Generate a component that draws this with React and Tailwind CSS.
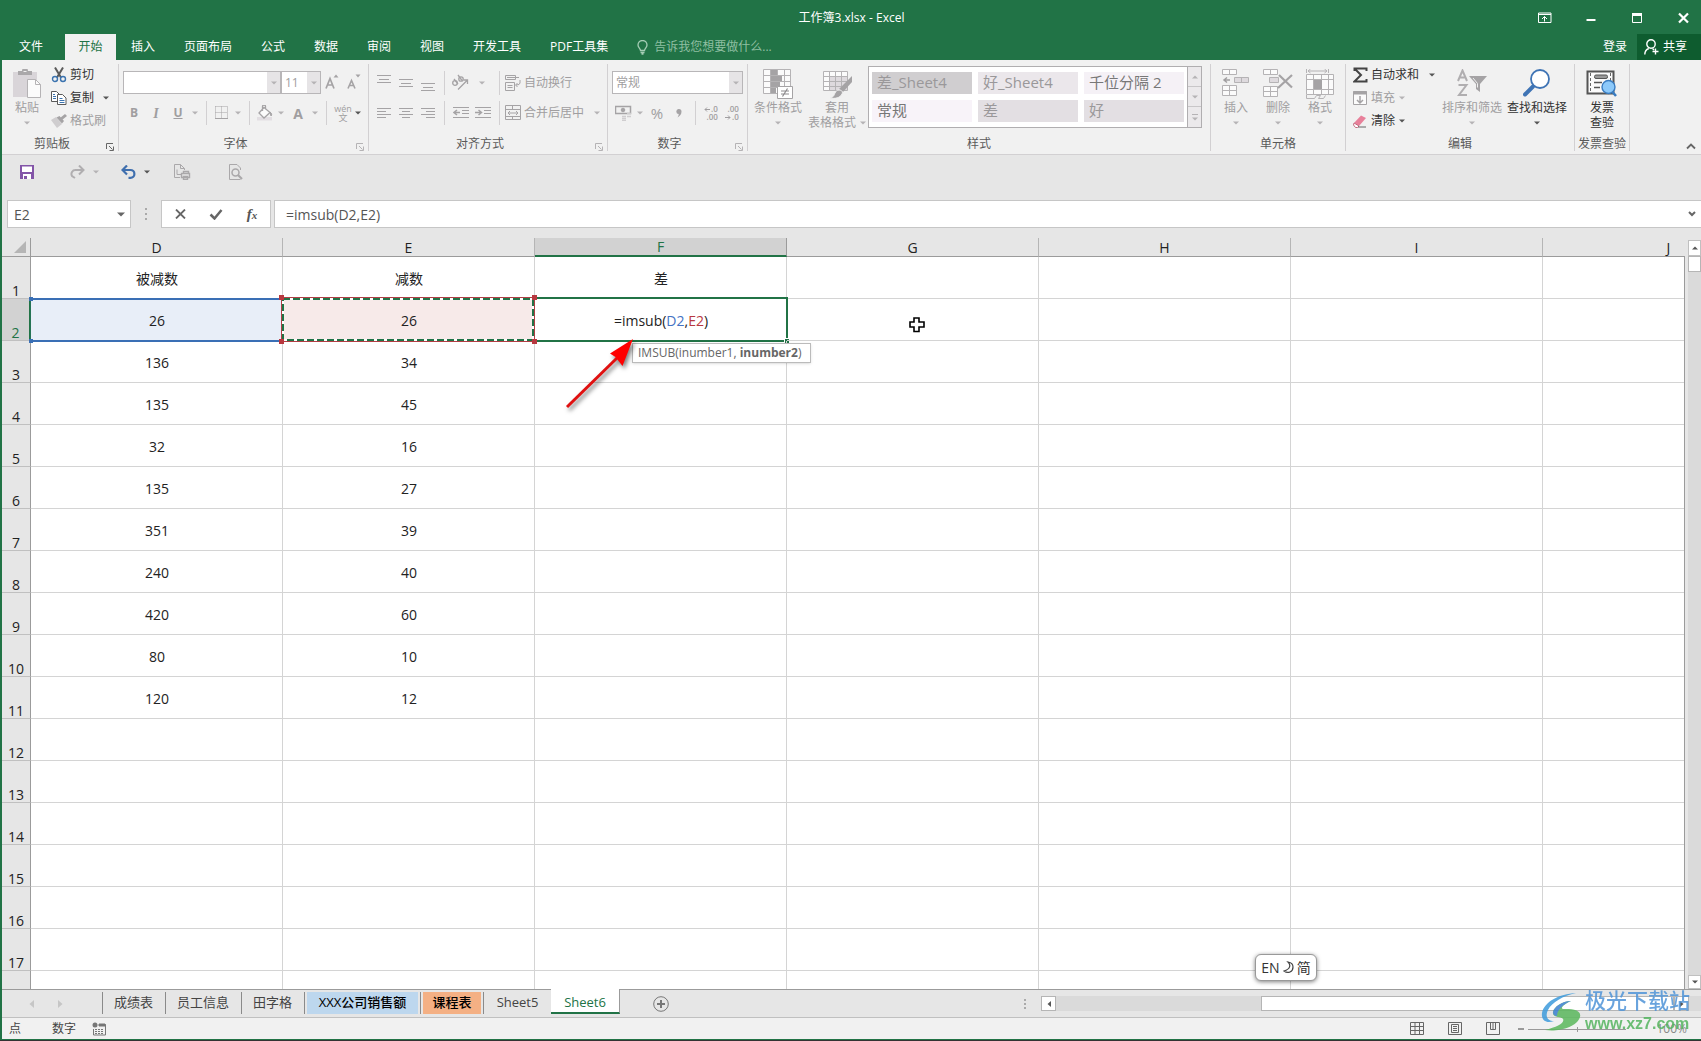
import { useState } from 'react';

const columns = ['D', 'E', 'F', 'G', 'H', 'I', 'J'];

const initialRows = [
  ['被减数', '减数', '差'],
  ['26', '26', '=imsub(D2,E2)'],
  ['136', '34'],
  ['135', '45'],
  ['32', '16'],
  ['135', '27'],
  ['351', '39'],
  ['240', '40'],
  ['420', '60'],
  ['80', '10'],
  ['120', '12'],
  [], [], [], [], [], [], [],
];

const menuTabs = ['插入', '页面布局', '公式', '数据', '审阅', '视图', '开发工具', 'PDF工具集'];

function Caret({ dark }) {
  return (
    <svg width="6" height="4" viewBox="0 0 6 4" aria-hidden="true" className="shrink-0">
      <path d="M0 0.5h6L3 3.5z" fill={dark ? '#555' : '#b5b3b5'} />
    </svg>
  );
}

function Launcher({ dark }) {
  return (
    <button aria-label="更多" className="absolute right-1 bottom-0">
      <svg width="8" height="8" viewBox="0 0 8 8" fill="none" stroke={dark ? '#666' : '#b5b3b5'}>
        <path d="M0.5 6V0.5H7M3 3l3.5 3.5M7.5 3.500v4h-4" />
      </svg>
    </button>
  );
}

function Group({ label, width, launcher, darkLauncher, children }) {
  return (
    <section className={`relative flex shrink-0 flex-col border-r border-[#d2d0d2] ${width}`}>
      <div className="flex h-[71px]">{children}</div>
      <div className={`h-4 text-center leading-[18px] whitespace-nowrap text-[#5a5a5a] ${launcher ? 'pr-4' : ''}`}>{label}</div>
      {launcher && <Launcher dark={darkLauncher} />}
    </section>
  );
}

function BigButton({ icon, lines, width, dark, inlineCaret, noCaret }) {
  return (
    <button className={`flex flex-col items-center pt-[5px] ${width} ${dark ? 'text-[#333]' : 'text-[#a09ea0]'}`}>
      <span className="flex h-[31px] items-start">{icon}</span>
      {lines.map((line, i) => (
        <span key={line} className="flex items-center gap-1 leading-[15px] whitespace-nowrap">
          {line}
          {inlineCaret && i === lines.length - 1 && <Caret />}
        </span>
      ))}
      {!inlineCaret && !noCaret && <span className="flex h-[15px] items-center"><Caret dark={dark} /></span>}
    </button>
  );
}

function RowButton({ icon, text, dark, caret, caretDark, gap = 'gap-1' }) {
  return (
    <button className={`flex h-[23px] items-center gap-[3px] whitespace-nowrap ${dark ? 'text-[#333]' : 'text-[#a09ea0]'}`}>
      <span className="flex w-4 justify-center">{icon}</span>
      <span>{text}</span>
      {caret && <span className={gap}><Caret dark={caretDark} /></span>}
    </button>
  );
}

function Tool({ label, width = 'w-[22px]', children }) {
  return (
    <button aria-label={label} className={`flex h-[22px] shrink-0 items-center justify-center text-[#a09ea0] ${width}`}>
      {children}
    </button>
  );
}

function Sep() {
  return <span className="mx-[5px] h-6 w-px shrink-0 bg-[#d2d0d2]" />;
}

function Dropdown({ label, value, width }) {
  return (
    <div className={`flex h-[23px] border border-[#b8b6b8] bg-white ${width}`}>
      <select aria-label={label} defaultValue={value} className="min-w-0 flex-1 appearance-none bg-white px-[3px] text-[12px] leading-5 text-[#a09ea0] outline-none">
        <option value={value}>{value}</option>
      </select>
      <span className="flex w-[13px] items-center justify-center bg-[#e6e4e6]"><Caret /></span>
    </div>
  );
}

function Lines({ rows }) {
  return (
    <svg width="14" height="16" viewBox="0 0 14 16" stroke="#a5a3a5" aria-hidden="true">
      {rows.map(([x1, x2, y]) => <path key={y} d={`M${x1} ${y}.5H${x2}`} />)}
    </svg>
  );
}

function PasteIcon() {
  return (
    <svg width="30" height="31" viewBox="0 0 30 31" aria-hidden="true">
      <path d="M1 3h24v25H1z" fill="#d9d5d9" />
      <path d="M6 2h4a3 3 0 0 1 6 0h4v4H6z" fill="#aaa8aa" />
      <path d="M11.500 2.500h3" stroke="#f1f1f1" />
      <path d="M15.500 10.500h8l5 5v13h-13z" fill="#fbfbfb" stroke="#b5b3b5" />
      <path d="M23.500 10.500v5h5" fill="none" stroke="#b5b3b5" />
    </svg>
  );
}

function CutIcon() {
  return (
    <svg width="16" height="16" viewBox="0 0 16 16" fill="none" aria-hidden="true">
      <path d="M4 0.500l6 10M12 0.500l-6 10" stroke="#5a5a5a" strokeWidth="2" />
      <circle cx="4" cy="12" r="2.500" stroke="#3b73af" strokeWidth="1.400" />
      <circle cx="12" cy="12" r="2.500" stroke="#3b73af" strokeWidth="1.400" />
    </svg>
  );
}

function CopyIcon() {
  return (
    <svg width="16" height="14" viewBox="0 0 16 14" fill="#fff" stroke="#5a5a5a" aria-hidden="true">
      <path d="M0.500 0.500h5l3 3v7h-8z" />
      <path d="M6.500 3.500h5l3.500 3.500v6.500H6.500z" />
      <path d="M2 3.500h2M2 5.500h3M2 7.500h3M8.500 7.500h3M8.500 9.500h5M8.500 11.500h5" stroke="#3b73af" />
    </svg>
  );
}

function BrushIcon() {
  return (
    <svg width="16" height="14" viewBox="0 0 16 14" aria-hidden="true">
      <path d="M0 6l5-3 6 7-5 4z" fill="#cfcdcf" />
      <path d="M5.500 3.500l3-1.500 4.500 5-2 2.500z" fill="#a5a3a5" />
      <path d="M9 4l5-4 2 2-5 4z" fill="#a5a3a5" />
    </svg>
  );
}

function ConditionalIcon() {
  return (
    <svg width="30" height="30" viewBox="0 0 30 30" fill="none" stroke="#b5b3b5" aria-hidden="true">
      <path d="M0.500 0.500h27v24H0.500zM0.500 6.500h27M0.500 12.500h27M0.500 18.500h27M7.500 0.500v24M14.500 0.500v24M21.500 0.500v24" fill="#fbfbfb" />
      <path d="M8 1h6v5H8zM8 7h11v5H8zM8 13h9v5H8zM8 19h5v5H8z" fill="#a5a3a5" stroke="none" />
      <path d="M14.500 17.500h15v12h-15z" fill="#fff" stroke="#a5a3a5" />
      <path d="M18 22h8M18 25h8M24.500 19.500l-5 8" stroke="#8d8b8d" strokeWidth="1.200" />
    </svg>
  );
}

function TableFormatIcon() {
  return (
    <svg width="30" height="30" viewBox="0 0 30 30" aria-hidden="true">
      <path d="M1.500 2.500h24v19h-24z" fill="#fbfbfb" />
      <path d="M8 8h17v13H8z" fill="#dedade" />
      <path d="M1.500 2.500h24v19h-24zM1.500 7.500h24M1.500 12.500h24M1.500 17.500h24M7.500 2.500v19M13.500 2.500v19M19.500 2.500v19" fill="none" stroke="#b5b3b5" />
      <path d="M30 7v6l-9 10-4-3z" fill="#a5a3a5" />
      <path d="M17 21c3 0 4 2 3 4-2 4-7 5-12 4 4-1 4-3 5-5 1-2 2-3 4-3z" fill="#a5a3a5" stroke="#f1f1f1" />
    </svg>
  );
}

function InsertIcon() {
  return (
    <svg width="28" height="28" viewBox="0 0 28 28" fill="#fbfbfb" stroke="#b5b3b5" aria-hidden="true">
      <path d="M0.500 0.500h14v5h-14zM7.500 0.500v5M0.500 16.500h14v10h-14zM0.500 21.500h14M7.500 16.500v10" />
      <path d="M12.500 8.500h14v5h-14zM19.500 8.500v5" fill="#dedade" />
      <path d="M8 11H2M5 8.500L2 11l3 2.500" fill="none" stroke="#a09ea0" strokeWidth="1.500" />
    </svg>
  );
}

function DeleteIcon() {
  return (
    <svg width="30" height="28" viewBox="0 0 30 28" fill="#fbfbfb" stroke="#b5b3b5" aria-hidden="true">
      <path d="M0.500 0.500h14v5h-14zM7.500 0.500v5M0.500 17.500h14v10h-14zM0.500 22.500h14M7.500 17.500v10" />
      <path d="M6.500 8.500h9v5h-9z" fill="#dedade" />
      <path d="M16 6l13 12.500M29 6L15 19" fill="none" stroke="#a5a3a5" strokeWidth="2.200" />
    </svg>
  );
}

function FormatIcon() {
  return (
    <svg width="28" height="31" viewBox="0 0 28 31" fill="none" stroke="#b5b3b5" aria-hidden="true">
      <path d="M0.500 5.500h27v20h-27zM0.500 10.500h27M0.500 20.500h27M7.500 5.500v20M15.500 5.500v20M22.500 5.500v20" fill="#fbfbfb" />
      <path d="M8 11h8v9H8z" fill="#a5a3a5" stroke="none" />
      <path d="M0.500 0v4M22.500 0v4M2 2h19M4.500 0L2 2l2.500 2M18.500 0L21 2l-2.500 2" />
      <path d="M0.500 26v3.500h8l2-3h4l-2 3h5l2-3" />
    </svg>
  );
}

function SortFilterIcon() {
  return (
    <svg width="30" height="28" viewBox="0 0 30 28" aria-hidden="true">
      <g fill="none" stroke="#b0aeb0" strokeWidth="2">
        <path d="M1 12L5.500 1.500 10 12M2.500 8.500h6" />
        <path d="M1.500 16h8L2 26h8" />
      </g>
      <path d="M12 7h18l-7 8v8l-4-3v-5z" fill="#a5a3a5" />
      <path d="M16 9l4.500 5.500v4" fill="none" stroke="#f1f1f1" />
    </svg>
  );
}

function FindIcon() {
  return (
    <svg width="28" height="28" viewBox="0 0 28 28" aria-hidden="true">
      <path d="M10 17.500L2 25.500" stroke="#3f74b5" strokeWidth="4" strokeLinecap="round" />
      <circle cx="17" cy="10" r="9" fill="#fff" stroke="#3f74b5" strokeWidth="1.800" />
    </svg>
  );
}

function InvoiceIcon() {
  return (
    <svg width="32" height="28" viewBox="0 0 32 28" aria-hidden="true">
      <path d="M1.500 2.500h26v22h-26z" fill="#fafafa" stroke="#555" strokeWidth="2" />
      <path d="M4.500 4v20M24.500 4v20" stroke="#666" strokeDasharray="3 2" />
      <rect x="8.500" y="6" width="13" height="3.500" rx="1.500" fill="#999" stroke="#555" />
      <path d="M8 13.500h8M8 18.500h6" stroke="#555" strokeWidth="1.500" />
      <path d="M26.500 23l3.500 4" stroke="#3a7cc0" strokeWidth="2.500" />
      <circle cx="22.500" cy="18" r="6.500" fill="#8cc9fa" stroke="#3a7cc0" strokeWidth="1.400" />
    </svg>
  );
}

function TitleBar() {
  return (
    <div className="relative flex h-[34px] items-center pt-[2px] text-white">
      <h1 className="flex-1 text-center text-[12px]">工作簿3.xlsx - Excel</h1>
      <div className="absolute right-0 flex gap-[10px]">
        <button aria-label="功能区显示选项" className="flex w-9 justify-center">
          <svg width="14" height="12" viewBox="0 0 14 12" fill="none" stroke="#fff"><path d="M0.500 1h12.500v9.500H0.500zM0.500 2.500h12.500M6.500 9.500V4.500M4 7l2.500-2.500L9 7" /></svg>
        </button>
        <button aria-label="最小化" className="flex w-9 items-center justify-center">
          <svg width="10" height="12" viewBox="0 0 10 12"><path d="M0.500 8h9" stroke="#fff" strokeWidth="2" /></svg>
        </button>
        <button aria-label="最大化" className="flex w-9 items-center justify-center">
          <svg width="10" height="12" viewBox="0 0 10 12"><path d="M0.500 1.500h9v9h-9z" fill="none" stroke="#fff" /><path d="M0 1h10v3H0z" fill="#fff" /></svg>
        </button>
        <button aria-label="关闭" className="flex w-9 items-center justify-center">
          <svg width="11" height="12" viewBox="0 0 11 12"><path d="M1 1.500l9 9M10 1.500l-9 9" stroke="#fff" strokeWidth="2.200" /></svg>
        </button>
      </div>
    </div>
  );
}

function MenuBar() {
  return (
    <div className="flex h-[26px] text-white">
      <nav className="flex">
        <button className="w-[63px] pr-[5px]">文件</button>
        <button className="w-[51px] bg-[#f1f1f1] text-[#217346]">开始</button>
        {menuTabs.map((tab) => (
          <button key={tab} className="pr-[14px] pl-[15px] whitespace-nowrap">{tab}</button>
        ))}
      </nav>
      <label className="ml-[15px] flex items-center gap-[6px]">
        <svg width="11" height="15" viewBox="0 0 11 15" fill="none" stroke="#a5cdb5" strokeWidth="1.300" aria-hidden="true">
          <path d="M3.500 10.500c0-2-2.500-3-2.500-5.500a4.400 4.400 0 0 1 9 0c0 2.500-2.500 3.500-2.500 5.500zM3.500 12.500h4M4.500 14h2" />
        </svg>
        <input aria-label="操作说明搜索" placeholder="告诉我您想要做什么..." className="w-[160px] bg-transparent placeholder:text-[#8fbfa2] outline-none" />
      </label>
      <div className="ml-auto flex">
        <button className="px-[10px]">登录</button>
        <button className="flex w-16 items-center gap-1 bg-[#0e5c2f] pl-[7px]">
          <svg width="15" height="16" viewBox="0 0 15 16" fill="none" stroke="#fff" strokeWidth="1.400" aria-hidden="true">
            <circle cx="7" cy="5" r="4.200" />
            <path d="M0.800 15.500c0-3 1.500-5 4-6M8.500 9.500l1.500 1.500M11.500 9.500v6M8.500 12.500h6" />
          </svg>
          共享
        </button>
      </div>
    </div>
  );
}

function ClipboardGroup() {
  return (
    <Group label="剪贴板" width="w-[117px]" launcher darkLauncher>
      <div className="ml-[5px]"><BigButton icon={<PasteIcon />} lines={['粘贴']} width="w-10" /></div>
      <div className="-mt-px ml-1">
        <RowButton icon={<CutIcon />} text="剪切" dark />
        <RowButton icon={<CopyIcon />} text="复制" dark caret caretDark gap="ml-[6px]" />
        <RowButton icon={<BrushIcon />} text="格式刷" />
      </div>
    </Group>
  );
}

function FontGroup() {
  return (
    <Group label="字体" width="w-[250px]" launcher>
      <div className="ml-1 flex flex-col gap-[7px] pt-[7px]">
        <div className="flex">
          <Dropdown label="字体" value="" width="w-[158px]" />
          <Dropdown label="字号" value="11" width="w-[40px]" />
          <Tool label="增大字号">
            <svg width="14" height="16" viewBox="0 0 14 16" fill="none" stroke="#a5a3a5"><path d="M1 14.500L5 4.500 9 14.500M2.500 11h5" strokeWidth="1.700" /><path d="M8.500 3.500h5L11 0.500z" fill="#a5a3a5" stroke="none" /></svg>
          </Tool>
          <Tool label="减小字号">
            <svg width="14" height="16" viewBox="0 0 14 16" fill="none" stroke="#a5a3a5"><path d="M1 14.500l3.500-8 3.500 8M2.500 11.500h4" strokeWidth="1.600" /><path d="M8.500 0.500h5L11 3.500z" fill="#a5a3a5" stroke="none" /></svg>
          </Tool>
        </div>
        <div className="flex items-center">
          <Tool label="加粗"><b>B</b></Tool>
          <Tool label="倾斜"><b className="font-['Liberation_Serif'] text-[14px] italic">I</b></Tool>
          <Tool label="下划线"><b className="underline">U</b></Tool>
          <Tool label="下划线选项" width="w-3"><Caret /></Tool>
          <Sep />
          <Tool label="边框" width="w-5">
            <svg width="14" height="14" viewBox="0 0 14 14" fill="none" stroke="#a5a3a5"><path d="M0.500 0.500h12v12M0.500 0.500v12M6.500 0.500v12M0.500 6.500h12" strokeDasharray="1 1" /><path d="M0 12.500h13" /></svg>
          </Tool>
          <Tool label="边框选项" width="w-3"><Caret /></Tool>
          <Sep />
          <Tool label="填充颜色" width="w-5">
            <svg width="16" height="16" viewBox="0 0 16 16" fill="none" stroke="#a5a3a5"><path d="M0 12h15v3.500H0z" fill="#e2dee2" stroke="none" /><path d="M7 2.500l6 5-6 5.500-5-5zM5.500 6V1.500a1.500 1.500 0 0 1 3 0V4" strokeWidth="1.300" fill="#fbfbfb" /><path d="M13 7c2 1.500 2 3 1 4z" fill="#a5a3a5" /></svg>
          </Tool>
          <Tool label="填充颜色选项" width="w-3"><Caret /></Tool>
          <Tool label="字体颜色"><b className="text-[14px]">A</b></Tool>
          <Tool label="字体颜色选项" width="w-3"><Caret /></Tool>
          <Sep />
          <Tool label="拼音">
            <span className="flex flex-col items-center text-[9px] leading-[9px]"><span>wén</span><span>文</span></span>
          </Tool>
          <Tool label="拼音选项" width="w-2"><Caret dark /></Tool>
        </div>
      </div>
    </Group>
  );
}

function AlignGroup() {
  return (
    <Group label="对齐方式" width="w-[239px]" launcher>
      <div className="ml-1 flex flex-col gap-[7px] pt-[7px]">
        <div className="flex h-[23px] items-center">
          <Tool label="顶端对齐"><Lines rows={[[0, 14, 0], [2, 12, 4], [0, 14, 7]]} /></Tool>
          <Tool label="垂直居中"><Lines rows={[[0, 14, 4], [2, 12, 8], [0, 14, 11]]} /></Tool>
          <Tool label="底端对齐"><Lines rows={[[0, 14, 8], [2, 12, 12], [0, 14, 15]]} /></Tool>
          <Sep />
          <Tool label="方向" width="w-5">
            <svg width="18" height="18" viewBox="0 0 18 18" fill="none" stroke="#a5a3a5" strokeWidth="1.300"><circle cx="4" cy="9" r="2.300" /><path d="M3 5l4 5M7 1l4 5.500" /><circle cx="10" cy="5" r="2.200" /><path d="M7 15.500L16 6.500M12.500 6H16.500V10" /></svg>
          </Tool>
          <Tool label="方向选项" width="w-6"><Caret /></Tool>
          <Sep />
          <RowButton text="自动换行" icon={
            <svg width="16" height="16" viewBox="0 0 16 16" fill="none" stroke="#a5a3a5"><path d="M0.500 0.500h10v4H0.500zM0.500 7.500h9v8H0.500zM2.500 10.500h5M2.500 12.500h5M2 2.500h12M15 5v3q0 2-4 2M12.500 8l-2 2 2 2" /></svg>
          } />
        </div>
        <div className="flex items-center">
          <Tool label="左对齐"><Lines rows={[[0, 14, 3], [0, 9, 6], [0, 14, 9], [0, 9, 12]]} /></Tool>
          <Tool label="居中"><Lines rows={[[0, 14, 3], [3, 11, 6], [0, 14, 9], [3, 11, 12]]} /></Tool>
          <Tool label="右对齐"><Lines rows={[[0, 14, 3], [5, 14, 6], [0, 14, 9], [5, 14, 12]]} /></Tool>
          <Sep />
          <Tool label="减少缩进">
            <svg width="16" height="14" viewBox="0 0 16 14" fill="none" stroke="#a5a3a5"><path d="M0 1.500h16M9 4.500h7M9 7.500h7M0 11.500h16" /><path d="M7 6.500H1M4 4L1 6.500 4 9" strokeWidth="1.500" /></svg>
          </Tool>
          <Tool label="增加缩进">
            <svg width="16" height="14" viewBox="0 0 16 14" fill="none" stroke="#a5a3a5"><path d="M0 1.500h16M9 4.500h7M9 7.500h7M0 11.500h16" /><path d="M0 6.500h6M3.500 4l3 2.500-3 2.500" strokeWidth="1.500" /></svg>
          </Tool>
          <Sep />
          <RowButton text="合并后居中" caret gap="ml-[7px]" icon={
            <svg width="16" height="16" viewBox="0 0 16 16" fill="none" stroke="#a5a3a5"><path d="M0.500 0.500h15v14H0.500zM0.500 4.500h15M0.500 11.500h15M7.500 0.500v4M7.500 11.500v3M3 8h10M5 6L3 8l2 2M11 6l2 2-2 2" /></svg>
          } />
        </div>
      </div>
    </Group>
  );
}

function NumberGroup() {
  return (
    <Group label="数字" width="w-[140px]" launcher>
      <div className="ml-1 flex flex-col gap-[7px] pt-[7px]">
        <Dropdown label="数字格式" value="常规" width="w-[131px]" />
        <div className="flex items-center">
          <Tool label="会计数字格式">
            <svg width="17" height="16" viewBox="0 0 17 16" fill="none" stroke="#a5a3a5"><path d="M0.500 1.500h15v7H0.500z" strokeWidth="1.500" /><circle cx="8" cy="5" r="1.800" fill="#a5a3a5" /><path d="M7 11.500h4M12 11.500h4M7 13.500h4M12 8.500h4M7 15.500h4" stroke="#cfcdcf" strokeWidth="1.500" /></svg>
          </Tool>
          <Tool label="会计选项" width="w-3"><Caret /></Tool>
          <Tool label="百分比"><span className="text-[15px]">%</span></Tool>
          <Tool label="千位分隔">
            <svg width="6" height="9" viewBox="0 0 6 9"><path d="M3 0a2.500 2.500 0 0 1 2.500 2.500C5.500 5.500 4 7 1.500 8.500c.8-1.500 1.200-2.300 1.200-3.500A2.500 2.500 0 0 1 3 0z" fill="#a5a3a5" /></svg>
          </Tool>
          <Sep />
          <Tool label="增加小数位数" width="w-5">
            <span className="flex flex-col items-end text-[8px] leading-[8px] font-semibold">
              <span className="flex items-center gap-px">
                <svg width="6" height="5" viewBox="0 0 6 5" fill="none" stroke="#a09ea0"><path d="M6 2.500H1M3 0.500l-2 2 2 2" /></svg>.0
              </span>
              <span>.00</span>
            </span>
          </Tool>
          <Tool label="减少小数位数">
            <span className="flex flex-col items-end text-[8px] leading-[8px] font-semibold">
              <span>.00</span>
              <span className="flex items-center gap-px">
                <svg width="6" height="5" viewBox="0 0 6 5" fill="none" stroke="#a09ea0"><path d="M0 2.500h5M3 0.500l2 2-2 2" /></svg>.0
              </span>
            </span>
          </Tool>
        </div>
      </div>
    </Group>
  );
}

function StylesGroup() {
  return (
    <Group label="样式" width="w-[463px]">
      <div className="ml-[2px]"><BigButton icon={<ConditionalIcon />} lines={['条件格式']} width="w-14" /></div>
      <BigButton icon={<TableFormatIcon />} lines={['套用', '表格格式']} width="w-[62px]" inlineCaret />
      <div className="mt-[2px] flex h-[62px] border border-[#b0aeb0] bg-white">
        <div className="grid grid-cols-[repeat(3,100px)] content-center gap-[6px] px-[3px] text-[15px] leading-5 text-[#9a989a]">
          <button className="h-[22px] bg-[#d0ced0] pb-[2px] pl-[5px] text-left">差_Sheet4</button>
          <button className="h-[22px] bg-[#ebe7eb] pb-[2px] pl-[5px] text-left">好_Sheet4</button>
          <button className="h-[22px] bg-[#f5f1f6] pb-[2px] pl-[5px] text-left text-[#777]">千位分隔 2</button>
          <button className="h-[22px] bg-[#f8f3f9] pb-[2px] pl-[5px] text-left text-[#777]">常规</button>
          <button className="h-[22px] bg-[#e3dfe3] pb-[2px] pl-[5px] text-left">差</button>
          <button className="h-[22px] bg-[#e3dfe3] pb-[2px] pl-[5px] text-left">好</button>
        </div>
        <div className="grid w-[14px] grid-rows-3 divide-y divide-[#c8c6c8] border-l border-[#b0aeb0] bg-[#ebe9eb]">
          <button aria-label="上一行" className="flex items-center justify-center"><span className="rotate-180"><Caret /></span></button>
          <button aria-label="下一行" className="flex items-center justify-center"><Caret /></button>
          <button aria-label="更多样式" className="flex flex-col items-center justify-center gap-[2px]"><span className="h-px w-[6px] bg-[#b5b3b5]" /><Caret /></button>
        </div>
      </div>
    </Group>
  );
}

function EditGroup() {
  return (
    <Group label="编辑" width="w-[229px]">
      <div className="-mt-px ml-[6px] w-[89px]">
        <RowButton text="自动求和" dark caret caretDark gap="ml-[7px]" icon={
          <svg width="15" height="16" viewBox="0 0 15 16"><path d="M1.500 4V1.500h12V4M1.500 1.500L8 8l-6.500 6.500h12V12" fill="none" stroke="#444" strokeWidth="2" /></svg>
        } />
        <RowButton text="填充" caret gap="ml-[1px]" icon={
          <svg width="14" height="16" viewBox="0 0 14 16" fill="none" stroke="#a5a3a5"><path d="M0.500 1.500h13v13H0.500z" fill="#fbfbfb" /><path d="M0 3h14" strokeWidth="3" /><path d="M7 6v7M4 10l3 3 3-3" strokeWidth="1.500" /></svg>
        } />
        <RowButton text="清除" dark caret caretDark gap="ml-[1px]" icon={
          <svg width="14" height="14" viewBox="0 0 14 14"><path d="M1 9L8 1.500l5 2.500-7 8z" fill="#e8809a" /><path d="M1 9l5 3-1.500 1.500H2.500L0.500 11z" fill="#fff" stroke="#c46a80" /><path d="M5 13h8" stroke="#666" /></svg>
        } />
      </div>
      <BigButton icon={<SortFilterIcon />} lines={['排序和筛选']} width="w-[62px]" />
      <div className="ml-[3px]"><BigButton icon={<FindIcon />} lines={['查找和选择']} width="w-[62px]" dark /></div>
    </Group>
  );
}

function Ribbon() {
  return (
    <div className="flex h-[95px] border-b border-[#d2d0d2] bg-[#f1f1f1] pt-1 pb-[3px]">
      <ClipboardGroup />
      <FontGroup />
      <AlignGroup />
      <NumberGroup />
      <StylesGroup />
      <Group label="单元格" width="w-[135px]">
        <div className="ml-1 flex">
          <BigButton icon={<InsertIcon />} lines={['插入']} width="w-[42px]" />
          <BigButton icon={<DeleteIcon />} lines={['删除']} width="w-[42px]" />
          <BigButton icon={<FormatIcon />} lines={['格式']} width="w-[42px]" />
        </div>
      </Group>
      <EditGroup />
      <Group label="发票查验" width="w-[55px]">
        <BigButton icon={<InvoiceIcon />} lines={['发票', '查验']} width="w-[54px]" dark noCaret />
      </Group>
      <button aria-label="折叠功能区" className="mr-[5px] ml-auto self-end">
        <svg width="10" height="10" viewBox="0 0 10 10" fill="none" stroke="#666" strokeWidth="1.800"><path d="M1 7.500l4-4 4 4" /></svg>
      </button>
    </div>
  );
}

function QuickAccess() {
  return (
    <div className="flex h-[35px] items-center pb-[2px] pl-[18px]">
      <button aria-label="保存">
        <svg width="14" height="14" viewBox="0 0 14 14"><path d="M0 0h14v14H0z" fill="#8355a8" /><path d="M2 1.500h10v5.500H2zM3 9h8v5H3z" fill="#fff" /><path d="M4 11h3v3H4z" fill="#8355a8" /></svg>
      </button>
      <button aria-label="恢复" className="ml-9">
        <svg width="15" height="14" viewBox="0 0 15 14" fill="none" stroke="#b0aeb0" strokeWidth="2"><path d="M13 5H5.500a4 4 0 0 0-3.500 6l3 2M9 0.500L13.500 5 9 9.500" /></svg>
      </button>
      <span className="ml-2"><Caret /></span>
      <button aria-label="撤消" className="ml-[22px]">
        <svg width="15" height="14" viewBox="0 0 15 14" fill="none" stroke="#3f6fae" strokeWidth="2.200"><path d="M2 5h7.500a3.800 3.800 0 0 1 0 7.800H7.500M6 0.500L1.500 5 6 9.500" /></svg>
      </button>
      <span className="ml-2"><Caret dark /></span>
      <button aria-label="快速打印" className="ml-6">
        <svg width="17" height="16" viewBox="0 0 17 16" fill="none" stroke="#aaa8aa"><path d="M6 13.500H0.500v-13h6l4 4V6M6.500 0.500v4h4" /><path d="M3 5.500v5h4" /><path d="M7.500 9.500h8v4h-8zM9.500 9.500v-2h5v2M9.500 12.500h4v3h-4z" strokeWidth="1.400" /></svg>
      </button>
      <button aria-label="打印预览" className="ml-[37px]">
        <svg width="15" height="16" viewBox="0 0 15 16" fill="none" stroke="#aaa8aa"><path d="M12.500 6V4l-3.500-3.500H1.500v15h11" /><circle cx="7.500" cy="8.500" r="3.500" strokeWidth="1.500" /><path d="M10 11l4 4" strokeWidth="2.200" /></svg>
      </button>
    </div>
  );
}

function FormulaBar({ value, onChange }) {
  return (
    <div className="mt-[10px] mb-[10px] flex h-7 items-stretch pl-[5px]">
      <div className="flex w-[124px] border border-[#c6c6c6] bg-white">
        <input aria-label="名称框" defaultValue="E2" className="min-w-0 flex-1 pl-[6px] text-[14px] text-[#555] outline-none" />
        <button aria-label="名称列表" className="flex w-[18px] items-center justify-center">
          <svg width="8" height="5" viewBox="0 0 8 5"><path d="M0 0.500h8L4 4.500z" fill="#666" /></svg>
        </button>
      </div>
      <div className="flex w-[30px] flex-col items-center justify-center gap-[3px]">
        <i className="size-[2px] bg-[#aaa]" /><i className="size-[2px] bg-[#aaa]" /><i className="size-[2px] bg-[#aaa]" />
      </div>
      <div className="grid w-[110px] grid-cols-3 border border-[#c6c6c6] bg-white">
        <button aria-label="取消" className="flex items-center justify-center">
          <svg width="11" height="10" viewBox="0 0 11 10"><path d="M1 0.500l9 9M10 0.500l-9 9" stroke="#666" strokeWidth="1.800" /></svg>
        </button>
        <button aria-label="输入" className="flex items-center justify-center">
          <svg width="14" height="11" viewBox="0 0 14 11"><path d="M1.500 5.500l4 4 7-8.500" fill="none" stroke="#666" strokeWidth="2.500" /></svg>
        </button>
        <button aria-label="插入函数" className="font-['Liberation_Serif'] text-[15px] font-bold text-[#555] italic">
          f<span className="text-[11px]">x</span>
        </button>
      </div>
      <div className="ml-[3px] flex flex-1 border border-r-0 border-[#c6c6c6] bg-white">
        <input aria-label="编辑栏" value={value} onChange={(e) => onChange(e.target.value)} className="min-w-0 flex-1 pl-[11px] text-[14px] text-[#555] outline-none" />
        <button aria-label="展开编辑栏" className="flex w-[18px] items-center justify-center">
          <svg width="8" height="6" viewBox="0 0 8 6"><path d="M1 1l3 3 3-3" fill="none" stroke="#666" strokeWidth="2" /></svg>
        </button>
      </div>
    </div>
  );
}

function Handles({ color }) {
  return (
    <>
      <i className={`absolute -top-[3px] -left-[3px] size-[5px] ${color}`} />
      <i className={`absolute -top-[3px] -right-[3px] size-[5px] ${color}`} />
      <i className={`absolute -bottom-[3px] -left-[3px] size-[5px] ${color}`} />
      <i className={`absolute -right-[3px] -bottom-[3px] size-[5px] ${color}`} />
    </>
  );
}

function Selection({ column }) {
  if (column === 'D') {
    return (
      <span className="absolute -top-px -right-px -bottom-[2px] -left-px border-y-2 border-[#3a6fb5] bg-[#4472c4]/12">
        <i className="absolute -top-[3px] -left-px size-[4px] bg-[#3a6fb5]" />
        <i className="absolute -bottom-[3px] -left-px size-[4px] bg-[#3a6fb5]" />
      </span>
    );
  }
  if (column === 'E') {
    return (
      <span className="absolute -top-[2px] -right-px -bottom-[2px] -left-[2px] z-10 border border-[#b04045] bg-[#c0504d]/12">
        <svg className="absolute inset-0 size-full" viewBox="0 0 252 43" preserveAspectRatio="none" fill="none" strokeWidth="2" aria-hidden="true">
          <rect x="1" y="1" width="250" height="41" stroke="#fff" />
          <rect x="1" y="1" width="250" height="41" stroke="#217346" strokeDasharray="7 3" />
        </svg>
        <Handles color="bg-[#b8383f]" />
      </span>
    );
  }
  return (
    <span className="absolute -top-[2px] -right-[2px] -bottom-[2px] left-[2px] border-2 border-l-0 border-[#217346]">
      <i className="absolute -right-[3px] -bottom-[3px] size-[5px] border-t border-l border-white bg-[#217346]" />
    </span>
  );
}

function FormulaHint() {
  return (
    <>
      <span className="absolute top-[44px] left-[97px] z-20 h-5 border border-[#bbb] bg-white pr-[9px] pl-[5px] text-[12px] leading-[17px] whitespace-nowrap text-[#666] shadow-sm">
        IMSUB(inumber1, <b>inumber2</b>)
      </span>
      <svg width="76" height="78" viewBox="0 0 76 78" className="absolute top-[40px] left-[28px] z-20 drop-shadow-[2px_3px_2px_rgba(0,0,0,0.5)]" aria-hidden="true">
        <path d="M4 68L54 19" stroke="#e01010" strokeWidth="3" />
        <path d="M70 0L47 14.500 52.500 18 59.500 27z" fill="#f00" />
      </svg>
    </>
  );
}

function Cell({ column, rowNumber, value }) {
  const formula = rowNumber === 2 && column === 'F';
  return (
    <td className="relative h-[42px] border-r border-b border-[#d4d4d4] p-0 pt-[2px] pl-px text-center text-[14px] text-[#222]">
      {rowNumber === 2 && ['D', 'E', 'F'].includes(column) && <Selection column={column} />}
      {formula ? (
        <span className="relative">=imsub(<span className="text-[#4472c4]">D2</span>,<span className="text-[#b8383f]">E2</span>)</span>
      ) : (
        <span className="relative z-10">{value}</span>
      )}
      {formula && <FormulaHint />}
      {rowNumber === 2 && column === 'G' && (
        <svg width="16" height="16" viewBox="0 0 16 16" className="absolute top-[18px] left-[122px]" aria-hidden="true">
          <path d="M5 1h5v4h5v5h-5v4.500H5V10H1V5h4z" fill="#fff" stroke="#000" strokeWidth="1.600" />
        </svg>
      )}
    </td>
  );
}

function Grid() {
  return (
    <div className="flex min-h-0 flex-1">
      <div className="min-w-0 flex-1 overflow-hidden">
        <table className="w-[1793px] table-fixed border-separate border-spacing-0">
          <colgroup>
            <col className="w-[29px]" />
            {columns.map((c) => <col key={c} className="w-[252px]" />)}
          </colgroup>
          <thead>
            <tr className="h-[19px]">
              <th className="border-r border-b border-[#9b9b9b] bg-[#e6e6e6] p-0 align-bottom">
                <svg width="12" height="12" viewBox="0 0 12 12" className="mr-1 mb-[3px] ml-auto" aria-label="全选" role="img"><path d="M12 0v12H0z" fill="#b5b5b5" /></svg>
              </th>
              {columns.map((c) => (
                <th key={c} scope="col" className={`h-[19px] border-r p-0 align-bottom text-[14px] leading-4 font-normal ${c === 'F' ? 'border-b-2 border-r-[#9b9b9b] border-b-[#217346] bg-[#d2d2d2] text-[#217346]' : 'border-b border-r-[#b5b5b5] border-b-[#9b9b9b] bg-[#e6e6e6] text-[#222]'}`}>{c}</th>
              ))}
            </tr>
          </thead>
          <tbody className="bg-white">
            {initialRows.map((row, i) => (
              <tr key={i}>
                <th scope="row" className={`h-[42px] border-r border-b border-b-[#c0c0c0] p-0 align-bottom text-[14px] leading-[15px] font-normal ${i === 1 ? 'border-r-2 border-r-[#217346] bg-[#d2d2d2] text-[#217346]' : 'border-r-[#9b9b9b] bg-[#e6e6e6] text-[#222]'}`}>{i + 1 < 18 ? i + 1 : ''}</th>
                {columns.map((c, j) => <Cell key={c} column={c} rowNumber={i + 1} value={row[j]} />)}
              </tr>
            ))}
          </tbody>
        </table>
      </div>
      <div className="flex w-[17px] pt-[2px]">
        <div className="mt-4 w-1 border-l border-[#9b9b9b]" />
        <div className="flex flex-1 flex-col bg-[#dadada]">
          <button aria-label="向上滚动" className="flex h-4 items-center justify-center border border-[#c0c0c0] bg-white"><span className="rotate-180"><Caret dark /></span></button>
          <div className="h-4 border border-[#b5b5b5] bg-white" />
          <button aria-label="向下滚动" className="mt-auto flex h-[14px] items-center justify-center border border-[#c0c0c0] bg-white"><Caret dark /></button>
        </div>
      </div>
    </div>
  );
}

function SheetTabs() {
  return (
    <div className="flex h-[29px] border-t border-b border-[#9b9b9b] border-b-[#c0c0c0] text-[13px] leading-[20px] text-[#444]">
      <div className="flex w-[100px] items-center gap-[24px] pl-[27px]">
        <button aria-label="上一个工作表"><svg width="5" height="8" viewBox="0 0 5 8"><path d="M5 0v8L0.500 4z" fill="#c6c6c6" /></svg></button>
        <button aria-label="下一个工作表"><svg width="5" height="8" viewBox="0 0 5 8"><path d="M0 0v8l4.500-4z" fill="#c6c6c6" /></svg></button>
      </div>
      <nav className="flex whitespace-nowrap">
        {['成绩表', '员工信息', '田字格'].map((name) => (
          <button key={name} className="mt-[2px] h-[22px] border-l border-[#8a8a8a] pr-3 pb-[2px] pl-[11px]">{name}</button>
        ))}
        <span className="mt-[2px] h-[22px] w-px bg-[#8a8a8a]" />
        <button className="mx-[2px] mt-[2px] h-[22px] w-[111px] bg-[#bdd7ee] pb-[2px] font-medium text-black">XXX公司销售额</button>
        <span className="mt-[2px] h-[22px] w-px bg-[#8a8a8a]" />
        <button className="mx-[2px] mt-[2px] h-[22px] w-[58px] bg-[#f4b084] pb-[2px] font-medium text-black">课程表</button>
        <button className="mt-[2px] h-[22px] w-[68px] border-l border-[#8a8a8a] pb-[2px]">Sheet5</button>
        <button className="-mt-px h-[25px] w-[69px] border-r border-b-2 border-r-[#9b9b9b] border-b-[#217346] bg-white pt-[2px] text-[#217346]">Sheet6</button>
      </nav>
      <button aria-label="新工作表" className="ml-[33px]">
        <svg width="16" height="16" viewBox="0 0 16 16" fill="none" stroke="#777"><circle cx="8" cy="8" r="7.300" /><path d="M8 4v8M4 8h8" strokeWidth="2" /></svg>
      </button>
      <div className="ml-auto flex w-[677px] items-center">
        <div className="flex w-[17px] flex-col gap-[2px]">
          <i className="size-[2px] bg-[#aaa]" /><i className="size-[2px] bg-[#aaa]" /><i className="size-[2px] bg-[#aaa]" />
        </div>
        <div className="flex h-[15px] flex-1 bg-[#dadada]">
          <button aria-label="向左滚动" className="flex w-[15px] items-center justify-center border border-[#b5b5b5] bg-white">
            <svg width="4" height="6" viewBox="0 0 4 6"><path d="M4 0v6L0.500 3z" fill="#555" /></svg>
          </button>
          <div className="ml-[205px] flex-1 border border-[#b5b5b5] bg-white" />
          <button aria-label="向右滚动" className="mr-3 flex w-[15px] items-center justify-center border border-[#b5b5b5] bg-white">
            <svg width="4" height="6" viewBox="0 0 4 6"><path d="M0 0v6l3.500-3z" fill="#555" /></svg>
          </button>
        </div>
      </div>
    </div>
  );
}

function StatusBar() {
  return (
    <footer className="flex h-[21px] items-center bg-[#f1f1f1] pr-[14px] pl-[7px] text-[#444]">
      <span>点</span>
      <span className="ml-[31px]">数字</span>
      <svg width="14" height="14" viewBox="0 0 14 14" className="ml-4" fill="none" stroke="#777" aria-hidden="true">
        <path d="M7 2.500h6.500V13H1.500V7" /><circle cx="3" cy="3" r="2.500" fill="#777" stroke="none" /><path d="M7 2h6v2H7z" fill="#777" /><path d="M3 7.500h9M3 9.500h9M3 11.500h9" strokeDasharray="2 1" />
      </svg>
      <div className="ml-auto flex items-center">
        <button aria-label="普通" className="mr-6"><svg width="14" height="14" viewBox="0 0 14 14" fill="none" stroke="#666"><path d="M0.500 0.500h13v12H0.500zM0.500 4.500h13M0.500 8.500h13M5 0.500v12M9.500 0.500v12" /></svg></button>
        <button aria-label="页面布局视图" className="mr-6"><svg width="14" height="14" viewBox="0 0 14 14" fill="none" stroke="#666"><path d="M0.500 0.500h13v12H0.500zM3.500 2.500h7v8h-7zM5 4.500h4M5 6.500h4M5 8.500h4" /></svg></button>
        <button aria-label="分页预览" className="mr-[18px]"><svg width="14" height="14" viewBox="0 0 14 14" fill="none" stroke="#666"><path d="M0.500 0.500h13v12H0.500zM4.500 0.500v7h5v-7M7 0.500v7" /></svg></button>
        <button aria-label="缩小" className="mr-1 h-[2px] w-[6px] bg-[#999]" />
        <div className="relative h-[10px] w-[98px]">
          <span className="absolute top-[5px] h-px w-full bg-[#999]" />
          <span className="absolute top-[3px] left-1/2 h-[5px] w-px bg-[#999]" />
        </div>
        <span className="w-[61px] text-right text-[#888]">100%</span>
      </div>
    </footer>
  );
}

function Watermark() {
  return (
    <div className="pointer-events-none absolute right-[11px] bottom-[6px] z-30 flex items-center gap-[2px] opacity-85">
      <svg width="42" height="42" viewBox="0 0 42 42" aria-hidden="true">
        <path d="M35 2C18 3 3 11 1 22c-1 7 4 11 12 8C6 30 4 25 7 19 11 11 22 5 35 2z" fill="#3d9bdc" />
        <path d="M30 10c-9 0-17 6-18 11-1 6 8 4 10 7 2 4-6 8-18 11 14 2 32-3 35-13 2-8-10-8-16-8-5 0 0-5 7-8z" fill="#5bb85d" />
        <path d="M30 10c-9 0-17 6-18 11 0 3 2 4 4 4 0-6 6-12 14-15z" fill="#3a7fd0" />
      </svg>
      <div className="flex flex-col whitespace-nowrap">
        <span className="text-[21px] leading-5 font-medium text-[#4f94d8]">极光下载站</span>
        <span className="pt-1 font-['Liberation_Sans'] text-[16px] leading-5 font-bold text-[#55b560]">www.xz7.com</span>
      </div>
    </div>
  );
}

export default function App() {
  const [formula, setFormula] = useState('=imsub(D2,E2)');

  return (
    <div className="relative flex h-screen flex-col overflow-hidden border-b border-[#333] font-['Open_Sans','Noto_Sans_CJK_SC',sans-serif] text-[12px]">
      <div className="flex min-h-0 flex-1 flex-col border-b border-l-2 border-[#217346] bg-[#e6e6e6]">
        <header className="bg-[#217346]">
          <TitleBar />
          <MenuBar />
        </header>
        <Ribbon />
        <QuickAccess />
        <FormulaBar value={formula} onChange={setFormula} />
        <Grid />
        <SheetTabs />
        <StatusBar />
      </div>
      <button className="absolute right-[384px] bottom-[59px] z-20 flex h-[27px] w-[62px] items-center justify-center gap-[3px] rounded-md border border-[#999] bg-white text-[14px] text-[#333] shadow-[0_1px_4px_rgba(0,0,0,0.5)]">
        EN
        <svg width="11" height="13" viewBox="0 0 11 13" fill="none" stroke="#444" strokeWidth="1.200" aria-hidden="true"><path d="M5 1c3 3 2.500 7-4 9 4 3 9 1 9-4 0-3-2-4.500-5-5z" /></svg>
        简
      </button>
      <Watermark />
    </div>
  );
}
